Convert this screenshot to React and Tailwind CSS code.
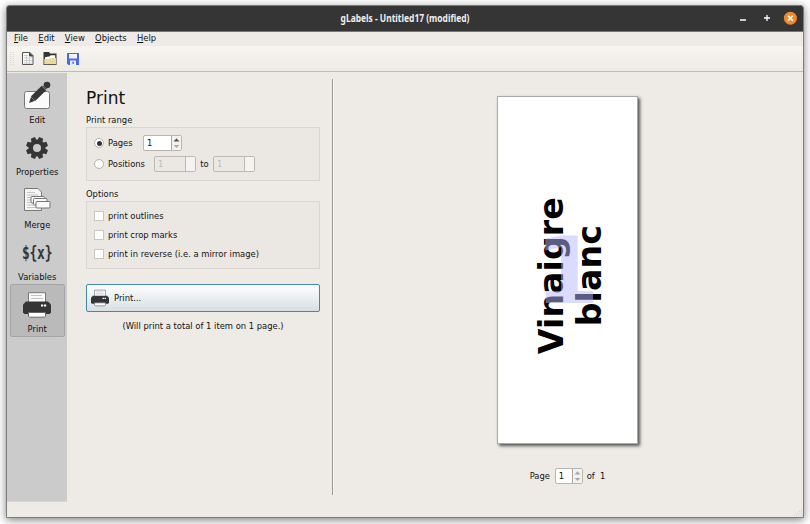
import React from "react";

function EditIcon() {
  return (
    <svg width="28" height="29" viewBox="0 0 28 29">
      <rect x="1.5" y="10.5" width="25" height="17" rx="2" fill="#fafafa" stroke="#777" />
      <path d="M6 22 8.300 15 18.700 4.800 23.200 9.300 12.700 19.500Z" fill="#353535" />
      <path d="m7.800 15.800 4.400 4.200" stroke="#aaa" strokeWidth=".6" />
      <path d="m19.700 5.500 3-2.800 3 3-3 2.800Z" fill="#353535" />
      <circle cx="24" cy="4" r="3.300" fill="#353535" />
      <path d="m19.500 4 4.500 4.500" stroke="#999" strokeWidth=".7" />
    </svg>
  );
}

function GearIcon() {
  return (
    <svg width="22" height="22" viewBox="-11 -11 22 22">
      <g fill="#353535">
        {[22.5, 67.5, 112.5, 157.5].map((a) => (
          <path key={a} transform={`rotate(${a})`} d="M-2.900-7-2.100-11H2.100L2.900-7V7L2.100 11H-2.100L-2.900 7Z" />
        ))}
        <circle r="8.300" />
      </g>
      <circle r="4" fill="#cbcbcb" />
    </svg>
  );
}

function MergeIcon() {
  return (
    <svg width="28" height="24" viewBox="0 0 28 24">
      <path d="M1.5.5H15L18.5 4V22.5H1.5Z" fill="#f5f5f5" stroke="#777" />
      <path d="M4 4.5h8M4 7h11M4 9.500h5M4 12h4M4 14.500h4M4 17h7M4 19.500h10" stroke="#c4c4c4" />
      <g fill="#fafafa" stroke="#777">
        <rect x="8" y="8.500" width="13.500" height="6.500" rx="1" />
        <rect x="10.500" y="10.500" width="13.500" height="6.500" rx="1" />
        <rect x="13" y="13.500" width="14" height="6.500" rx="1" />
      </g>
    </svg>
  );
}

function PrinterIcon({ width, height }) {
  return (
    <svg width={width} height={height} viewBox="0 0 28 26">
      <path d="M5.500 10V.7h17V10" fill="#fafafa" stroke="#777" />
      <path d="M8 3.500h11M8 6.500h12" stroke="#c0c0c0" />
      <path d="M3 9.500H25L28 12.500V20.500L26.500 22H1.500L0 20.500V12.500Z" fill="#353535" />
      <path d="M18 12.500h2.200v2H18zM21 12.500h2.200v2H21z" fill="#fff" />
      <path d="M5.500 20.500h17v3.700l-1 1h-15l-1-1z" fill="#fff" stroke="#666" />
    </svg>
  );
}

function NewIcon() {
  return (
    <svg width="12" height="13" viewBox="0 0 12 13">
      <path d="M.5.5H8L11 3.500V12.500H.5Z" fill="#fafafa" stroke="#555" />
      <path d="M7.500.5v3.500h3.500" fill="#444" stroke="#444" />
      <path d="M2 3.500h4M2 6h8M2 8.500h8M2 11h8M4.500 3v9M7.500 5v7" stroke="#c4c4c4" strokeWidth=".8" />
    </svg>
  );
}

function OpenIcon() {
  return (
    <svg width="14" height="13" viewBox="0 0 14 13">
      <path d="M.5 0H6L7.200 1.500H13.500V13H.5Z" fill="#353535" />
      <path d="M2 7V5.200l5-1 .6-1h4.600V7z" fill="#fff" />
      <path d="M1.200 7h5l1.300-1h5.500v6.200H1.200z" fill="#e8da9b" />
    </svg>
  );
}

function SaveIcon() {
  return (
    <svg width="12" height="12" viewBox="0 0 12 12">
      <path d="M0 0H12V12H1.500L0 10.500Z" fill="#4a68ec" />
      <path d="M2 1h8v4.500H2z" fill="#f1f3ff" />
      <path d="M3 7.500h6V12H3z" fill="#e9ecfd" />
      <path d="M5.300 8.700h1.700v2H5.300z" fill="#4a68ec" />
    </svg>
  );
}

function Grip({ className }) {
  return (
    <svg className={className} width="4" height="13" viewBox="0 0 4 13">
      <path d="M.5 0v13M3.200 0v13" stroke="#d6d2cb" strokeDasharray="1 1" />
    </svg>
  );
}

function Arrows({ up, down }) {
  return (
    <svg width="9" height="14" viewBox="0 0 9 14">
      <path d="m1.500 5.500 3-3.200 3 3.200Z" fill={up} />
      <path d="m1.500 9 3 3 3-3Z" fill={down} />
    </svg>
  );
}

function Spin({ className, up = "#555", down = "#aaa" }) {
  return (
    <div className={"flex h-[16px] rounded-[2px] border border-[#b9b6b2] bg-white " + className}>
      <span className="flex-1 pl-[3px] leading-[15px]">1</span>
      <span className="w-[10px] border-l border-[#aaa7a3] bg-[#f4f2f0]">
        <Arrows up={up} down={down} />
      </span>
    </div>
  );
}

function DisabledSpin() {
  return (
    <div className="flex h-[16px] w-[42px] rounded-[2px] border border-[#bcb9b5] bg-[#ebe8e4] text-[#bdbab7]">
      <span className="flex-1 pl-[3px] leading-[15px]">1</span>
      <span className="w-[10px] border-l border-[#bcb9b5] bg-[#f5f4f2]" />
    </div>
  );
}

function Radio({ checked }) {
  return (
    <span className="flex size-[10px] items-center justify-center rounded-full border border-[#b5b2ae] bg-white">
      {checked && <span className="size-[5px] rounded-full bg-[#333]" />}
    </span>
  );
}

const tabs = [
  { label: "Edit", icon: <EditIcon /> },
  { label: "Properties", icon: <GearIcon /> },
  { label: "Merge", icon: <MergeIcon /> },
  {
    label: "Variables",
    icon: <span className="text-[18px] leading-none font-bold tracking-[-0.3px] text-[#353535] [font-family:'DejaVu_Sans_Mono',monospace] [transform:scaleX(.72)]">{"${x}"}</span>,
  },
  { label: "Print", icon: <PrinterIcon width={28} height={26} />, active: true },
];

function Sidebar() {
  return (
    <nav className="mt-px h-[429px] w-[60px] shrink-0 border-b border-[#d6d5d3] bg-[#cbcbcb] pt-[1.900px] pl-[3px]">
      {tabs.map((t) => (
        <div
          key={t.label}
          className={
            "flex h-[52.400px] w-[54.500px] flex-col items-center rounded-[2px] border " +
            (t.active ? "border-[#a5a5a5] bg-[#bababa]" : "border-transparent")
          }
        >
          <div className="flex h-[39px] items-center justify-center">{t.icon}</div>
          <span className="leading-[11px]">{t.label}</span>
        </div>
      ))}
    </nav>
  );
}

function PrintPanel() {
  return (
    <section className="w-[265px] shrink-0 pt-[16px] pl-[19px]">
      <h1 className="text-[17px] leading-[21px]">Print</h1>
      <h2 className="mt-[5px] leading-[12px]">Print range</h2>
      <div className="mt-px h-[54px] w-[234px] border border-[#d9d6d2] bg-[#ebe8e4] pt-[7px] pl-[7px]">
        <div className="flex h-[16px] items-center">
          <Radio checked />
          <span className="ml-[4px] w-[35px]">Pages</span>
          <Spin className="w-[39px]" />
        </div>
        <div className="mt-[5px] flex h-[16px] items-center">
          <Radio />
          <span className="ml-[4px] w-[46px]">Positions</span>
          <DisabledSpin />
          <span className="w-[17px] text-center">to</span>
          <DisabledSpin />
        </div>
      </div>
      <h2 className="mt-[7px] leading-[12px]">Options</h2>
      <div className="mt-px flex h-[68px] w-[234px] flex-col gap-[7px] border border-[#d9d6d2] bg-[#ebe8e4] pt-[8px] pl-[7px]">
        {["print outlines", "print crop marks", "print in reverse (i.e. a mirror image)"].map((o) => (
          <div key={o} className="flex h-[12px] items-center">
            <span className="size-[10px] border border-[#c9c6c2] bg-white" />
            <span className="ml-[4px]">{o}</span>
          </div>
        ))}
      </div>
      <button className="mt-[15px] flex h-[28px] w-[234px] items-center rounded-[2px] border border-[#3f88ae] bg-linear-to-b from-[#fdfefe] to-[#d8dfe3] pl-[4px]">
        <PrinterIcon width={18} height={18} />
        <span className="ml-[5px]">Print...</span>
      </button>
      <p className="mt-[8px] w-[234px] text-center leading-[12px]">(Will print a total of 1 item on 1 page.)</p>
    </section>
  );
}

function Preview() {
  return (
    <section className="flex flex-1 flex-col items-center pt-[25px] pr-[2px]">
      <svg
        className="h-[346px] w-[139px] bg-white shadow-[2px_2px_3px_1px_#555] outline outline-[#aaa]"
        viewBox="497 97 139 346"
      >
        <g fontFamily="DejaVu Sans" fontWeight="700" fontSize="33.300" textAnchor="middle" fill="#000">
          <text transform="translate(561.500 275.700) rotate(-90)">Vinaigre</text>
          <text transform="translate(600.200 275.700) rotate(-90)">blanc</text>
        </g>
        <text x="566" y="302.500" fontFamily="DejaVu Sans" fontWeight="700" fontSize="93" textAnchor="middle" fill="#b8b8ff" fillOpacity=".5">1</text>
      </svg>
      <div className="mt-[25px] flex h-[16px] items-center">
        <span className="w-[25px]">Page</span>
        <Spin className="w-[28px]" up="#aaa" down="#aaa" />
        <span className="ml-[4px] whitespace-pre">of  1</span>
      </div>
    </section>
  );
}

export default function App() {
  return (
    <div className="h-[524px] w-[810px] overflow-hidden bg-white pt-[5px] pl-[6px] text-[8.400px] leading-[12px] text-[#111] [font-family:'DejaVu_Sans',sans-serif]">
      <div className="flex h-[513px] w-[798px] flex-col overflow-hidden rounded-t-[3px] border border-[#7c7c7a] bg-[#eeebe6] shadow-[0_2px_9px_rgba(0,0,0,.5)]">
        <header className="flex h-[26px] shrink-0 items-center border-b border-[#777] bg-[#353535] text-white">
          <span className="w-[70px]" />
          <span className="flex-1 text-center text-[9.800px] font-bold whitespace-nowrap text-[#f0f0f0] [font-family:'Noto_Sans',sans-serif] [transform:scaleX(.86)]">
            gLabels - Untitled17 (modified)
          </span>
          <svg width="70" height="25" viewBox="733 6 70 25">
            <path d="M740 20h6M764 18h6M767 15v6" stroke="#fff" strokeWidth="1.300" />
            <circle cx="790.400" cy="18.200" r="6.500" fill="#ee8a2b" />
            <path d="m788 15.800 4.800 4.800m0-4.800-4.800 4.800" stroke="#fff" strokeWidth="1.500" />
          </svg>
        </header>
        <nav className="flex h-[14px] shrink-0 gap-[10.300px] pl-[7px] leading-[13px]">
          {["File", "Edit", "View", "Objects", "Help"].map((m) => (
            <span key={m}>
              <span className="underline decoration-1 underline-offset-1">{m[0]}</span>
              {m.slice(1)}
            </span>
          ))}
        </nav>
        <div className="flex h-[26px] shrink-0 items-center border-b border-[#bfbcb8] bg-linear-to-b from-[#f8f5f0] to-[#eeebe6] pl-[3px]">
          <Grip />
          <span className="ml-[8px]"><NewIcon /></span>
          <span className="ml-[9px]"><OpenIcon /></span>
          <span className="ml-[10px]"><SaveIcon /></span>
        </div>
        <main className="flex flex-1">
          <Sidebar />
          <PrintPanel />
          <div className="mt-[7px] h-[416px] w-[2px] border-l border-[#999693] bg-[#f7f5f2]" />
          <div className="flex flex-1 flex-col">
            <Preview />
            <svg className="self-end" width="9" height="9" viewBox="0 0 9 9">
              <path d="M0 7.500h9M2.500 5.500H9M5 3.500h4M7 1.500h2" stroke="#d5d2cd" strokeDasharray="1 1" />
            </svg>
          </div>
        </main>
      </div>
    </div>
  );
}
